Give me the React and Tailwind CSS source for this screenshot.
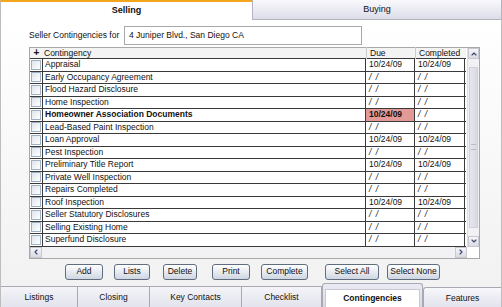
import { ChevronUp, ChevronDown, ChevronLeft, ChevronRight } from "lucide-react"

const rows = [
  { name: "Appraisal", due: "10/24/09", done: "10/24/09" },
  { name: "Early Occupancy Agreement" },
  { name: "Flood Hazard Disclosure" },
  { name: "Home Inspection" },
  { name: "Homeowner Association Documents", due: "10/24/09", bold: true, late: true },
  { name: "Lead-Based Paint Inspection" },
  { name: "Loan Approval", due: "10/24/09", done: "10/24/09" },
  { name: "Pest Inspection" },
  { name: "Preliminary Title Report", due: "10/24/09", done: "10/24/09" },
  { name: "Private Well Inspection" },
  { name: "Repairs Completed" },
  { name: "Roof Inspection", due: "10/24/09", done: "10/24/09" },
  { name: "Seller Statutory Disclosures" },
  { name: "Selling Existing Home" },
  { name: "Superfund Disclosure" },
]

const buttons = [
  { label: "Add", w: "w-[38px]", ml: "ml-[64px]" },
  { label: "Lists", w: "w-[36px]", ml: "ml-[11px]" },
  { label: "Delete", w: "w-[34px]", ml: "ml-[13px]" },
  { label: "Print", w: "w-[38px]", ml: "ml-[15px]" },
  { label: "Complete", w: "w-[47px]", ml: "ml-[11px]" },
  { label: "Select All", w: "w-[54px]", ml: "ml-[17px]" },
  { label: "Select None", w: "w-[53px]", ml: "ml-[8px]" },
]

const tabs = [
  { label: "Listings", w: "w-[77px]" },
  { label: "Closing", w: "w-[72px]" },
  { label: "Key Contacts", w: "w-[92px]" },
  { label: "Checklist", w: "w-[80px]" },
]

const DateCell = ({ value, className }) => (
  <div className={`h-full flex items-center pl-[3px] border-r border-[#3a3a3a] ${className}`}>
    {value ? value : <span className="italic tracking-[1px]">/ /</span>}
  </div>
)

const App = () => {
  return (
    <div className="w-[502px] h-[307px] flex flex-col bg-[#f6f6f6] text-[8.5px] text-[#111] overflow-hidden" style={{ fontFamily: '"Liberation Sans", Arial, sans-serif' }}>
      {/* top tabs */}
      <div className="h-[20px] flex shrink-0">
        <div className="w-[252px] bg-white border-t-2 border-[#f3a51c] border-l border-l-[#bbb] flex items-center justify-center font-bold text-[9px]">
          Selling
        </div>
        <div className="flex-1 bg-gradient-to-b from-[#f9f9fd] to-[#dcdde9] border-l border-r border-b border-[#b4b4c0] flex items-center justify-center text-[9px]">
          Buying
        </div>
      </div>

      {/* body */}
      <div className="flex-1 flex flex-col border-l border-r border-[#bdbdbd] bg-gradient-to-b from-white to-[#f2f2f2]">
        <div className="flex items-center mt-[6px] h-[19px]">
          <span className="ml-[28px] w-[95px]">Seller Contingencies for</span>
          <div className="w-[238px] h-[19px] bg-white border border-[#a9a9a9] flex items-center pl-[4px]">
            4 Juniper Blvd., San Diego CA
          </div>
        </div>

        {/* table */}
        <div className="ml-[28px] mt-[2px] w-[451px] border border-[#a8a8a8] bg-white flex flex-col">
          <div className="flex">
            <div className="w-[437px] flex flex-col">
              <div className="h-[11px] flex items-center bg-[#f3f3f3] border-b border-[#3a3a3a]">
                <div className="w-[13px] text-center font-bold text-[10px] leading-none">+</div>
                <div className="w-[323px] pl-[1px]">Contingency</div>
                <div className="w-[49px] pl-[3px] border-l border-[#ccc]">Due</div>
                <div className="w-[50px] pl-[3px] border-l border-[#ccc]">Completed</div>
              </div>
              {rows.map((r) => (
                <div key={r.name} className="h-[12.5px] flex items-stretch border-b border-[#3a3a3a]">
                  <div className="w-[13px] flex items-center justify-center border-r border-[#3a3a3a]">
                    <div className="w-[10px] h-[10px] border border-[#9fb0c2] bg-gradient-to-br from-[#dfe5ec] to-white" />
                  </div>
                  <div className={`w-[323px] flex items-center pl-[2px] border-r border-[#3a3a3a] ${r.bold ? "font-bold" : ""}`}>
                    {r.name}
                  </div>
                  <DateCell value={r.due} className={`w-[49px] ${r.late ? "bg-[#e39a97] font-bold" : ""}`} />
                  <DateCell value={r.done} className="w-[50px]" />
                </div>
              ))}
            </div>
            {/* vertical scrollbar */}
            <div className="ml-[1px] w-[12px] flex flex-col bg-[#f2f2f5] border-l border-[#ddd]">
              <div className="h-[11px] flex items-center justify-center bg-gradient-to-b from-[#f5f5fa] to-[#dadae4] border border-[#c8c8d0]">
                <ChevronUp size={8} strokeWidth={3.5} color="#3a4a6a" />
              </div>
              <div className="flex-1 mx-[1px] my-[8px] bg-gradient-to-r from-[#e6e7ee] to-[#d8d9e3] border border-[#d0d0da] flex items-center justify-center">
                <div className="w-[5px] h-[6px] border-y border-[#bbb]" />
              </div>
              <div className="h-[11px] flex items-center justify-center bg-gradient-to-b from-[#f5f5fa] to-[#dadae4] border border-[#c8c8d0]">
                <ChevronDown size={8} strokeWidth={3.5} color="#3a4a6a" />
              </div>
            </div>
          </div>
          {/* horizontal scrollbar */}
          <div className="h-[11px] flex bg-[#f2f2f5]">
            <div className="w-[12px] flex items-center justify-center bg-gradient-to-b from-[#f5f5fa] to-[#dadae4] border border-[#c8c8d0]">
              <ChevronLeft size={8} strokeWidth={3.5} color="#3a4a6a" />
            </div>
            <div className="w-[413px]" />
            <div className="w-[12px] flex items-center justify-center bg-gradient-to-b from-[#f5f5fa] to-[#dadae4] border border-[#c8c8d0]">
              <ChevronRight size={8} strokeWidth={3.5} color="#3a4a6a" />
            </div>
            <div className="flex-1 bg-white" />
          </div>
        </div>

        {/* buttons */}
        <div className="flex mt-[5px]">
          {buttons.map((b) => (
            <div key={b.label} className={`${b.w} ${b.ml} h-[16px] rounded-[3px] border border-[#5f6d7e] bg-gradient-to-b from-white to-[#cfd6e2] flex items-center justify-center text-[8.5px]`}>
              {b.label}
            </div>
          ))}
        </div>
      </div>

      {/* bottom tabs */}
      <div className="h-[24px] flex items-end shrink-0 bg-[#f2f2f2] border-l border-r border-[#bdbdbd]">
        {tabs.map((t) => (
          <div key={t.label} className={`${t.w} h-[21px] flex items-center justify-center bg-gradient-to-b from-[#f4f4f9] to-[#e2e3ec] border-t border-r border-[#a9a9b4] text-[8.5px]`}>
            {t.label}
          </div>
        ))}
        <div className="w-[101px] h-[24px] flex flex-col bg-gradient-to-b from-[#e9eaf3] to-[#d9dae6] border border-b-0 border-[#a9a9b4] rounded-t-[3px] px-[2px] pt-[5px]">
          <div className="flex-1 bg-white border border-b-0 border-[#c9c9d4] flex items-center justify-center font-bold text-[8.5px]">
            Contingencies
          </div>
        </div>
        <div className="flex-1 h-[20px] flex items-center justify-center bg-gradient-to-b from-[#f7f7fc] to-[#e2e3ec] border-t border-l border-[#a9a9b4] rounded-tl-[3px] text-[8.5px] pt-[2px]">
          Features
        </div>
      </div>
    </div>
  )
}

export default App
